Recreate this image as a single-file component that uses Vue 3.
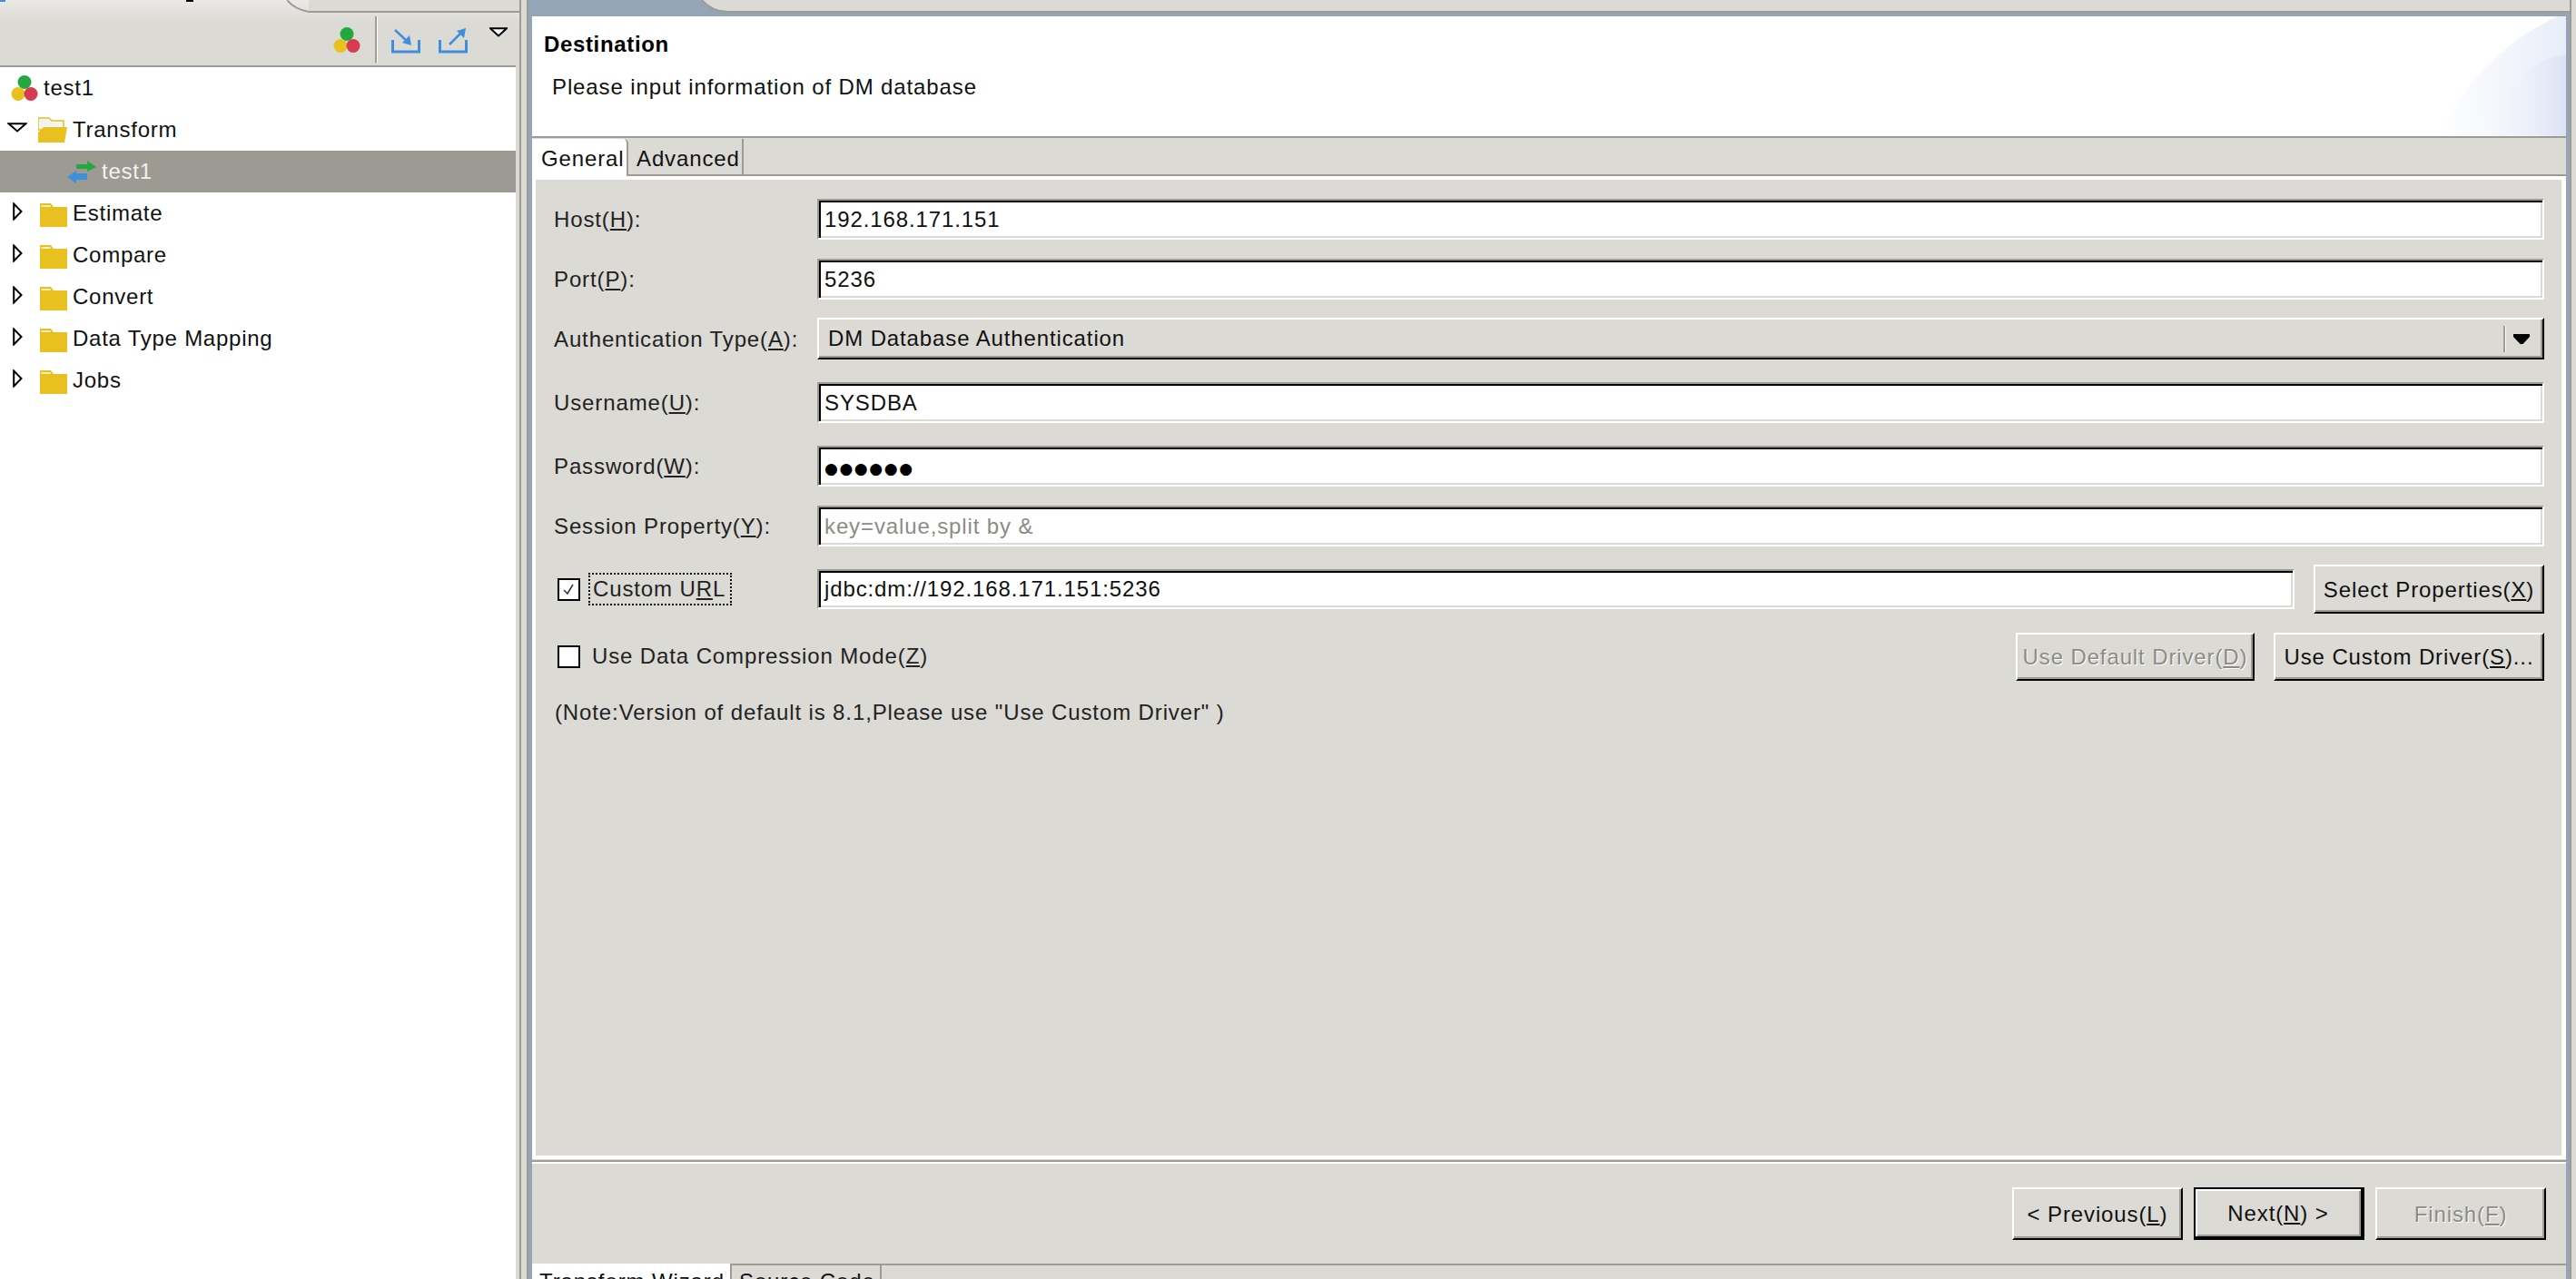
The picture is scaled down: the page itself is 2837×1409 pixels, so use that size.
<script setup>
const folders = ['Estimate', 'Compare', 'Convert', 'Data Type Mapping', 'Jobs']
</script>

<template>
  <div class="page">
    <aside class="left">
      <div class="view-tabs">
        <span class="speck-blue"></span>
        <span class="speck-black"></span>
        <div class="view-tab-space"></div>
        <svg class="view-tab-curve" width="24" height="14" viewBox="0 0 24 14">
          <path d="M0 0 Q8 10 24 13" fill="none" stroke="#9d9b93" stroke-width="2" />
        </svg>
        <div class="view-tab-rest"></div>
      </div>
      <div class="toolbar">
        <svg class="tb-icon" width="30" height="29" viewBox="0 0 30 29">
          <circle cx="15" cy="7.500" r="7.500" fill="#22a83f" />
          <circle cx="8" cy="20.500" r="7.500" fill="#e8c020" />
          <circle cx="22" cy="20.500" r="7.500" fill="#d63c50" />
        </svg>
        <span class="tb-sep"></span>
        <svg class="tb-tray" width="32" height="28" viewBox="0 0 32 28">
          <path d="M1.500 13 V26 H30.500 V13" fill="none" stroke="#3f8fdc" stroke-width="3" />
          <path d="M4 2 L19 16" stroke="#3f8fdc" stroke-width="2.500" />
          <path d="M22 19 L12 16 L20 8 Z" fill="#3f8fdc" />
        </svg>
        <svg class="tb-tray second" width="32" height="28" viewBox="0 0 32 28">
          <path d="M1.500 13 V26 H30.500 V13" fill="none" stroke="#3f8fdc" stroke-width="3" />
          <path d="M12 18 L27 3" stroke="#3f8fdc" stroke-width="2.500" />
          <path d="M30 0 L20 3 L28 11 Z" fill="#3f8fdc" />
        </svg>
        <svg class="tb-menu" width="20" height="11" viewBox="0 0 20 11">
          <path d="M1 1.200 H19 L10 9.500 Z" fill="#fff" stroke="#000" stroke-width="2" />
        </svg>
      </div>
      <div class="tree">
        <div class="row root">
          <svg width="30" height="29" viewBox="0 0 30 29">
            <circle cx="15" cy="7.500" r="7.500" fill="#22a83f" />
            <circle cx="8" cy="20.500" r="7.500" fill="#e8c020" />
            <circle cx="22" cy="20.500" r="7.500" fill="#d63c50" />
          </svg>
          <span>test1</span>
        </div>
        <div class="row open">
          <svg class="twisty" width="22" height="11" viewBox="0 0 22 11">
            <path d="M1.500 1.200 H20.500 L11 9.500 Z" fill="#fff" stroke="#000" stroke-width="2" />
          </svg>
          <svg class="folder-open" width="32" height="28" viewBox="0 0 32 28">
            <path d="M0 1 H12 L15 4 H28 V14 H0 Z" fill="#f4f4f0" stroke="#e8c020" stroke-width="1.500" />
            <path d="M0 17 L6 11 H32 L29 28 H0 Z" fill="#e8c020" />
          </svg>
          <span>Transform</span>
        </div>
        <div class="row selected">
          <svg width="32" height="25" viewBox="0 0 32 25">
            <path d="M10 4 H22 V0 L32 7 L22 12 V9 H10 Z" fill="#22a83f" />
            <path d="M22 14 H10 V11 L0 18 L10 25 V21 H22 Z" fill="#3f8fdc" />
          </svg>
          <span>test1</span>
        </div>
        <div v-for="name in folders" :key="name" class="row closed">
          <svg class="twisty-side" width="11" height="20" viewBox="0 0 11 20">
            <path d="M1.200 1.500 V18.500 L9.500 10 Z" fill="#fff" stroke="#000" stroke-width="2" />
          </svg>
          <svg class="folder" width="30" height="26" viewBox="0 0 30 26">
            <path d="M0 0 H12 L15 4 H30 V26 H0 Z" fill="#e8c020" />
            <path d="M1.500 2 H11 L12.500 4 H1.500 Z" fill="#f6eeb8" />
          </svg>
          <span>{{ name }}</span>
        </div>
      </div>
    </aside>

    <div class="sash"></div>

    <main class="editor">
      <div class="editor-tabs">
        <svg class="editor-tab-shape" width="218" height="14" viewBox="0 0 218 14">
          <rect width="218" height="14" fill="#93a5b7" />
          <path d="M191 0 Q201 12 218 12 V0 Z" fill="#dbdad5" />
          <path d="M191 0 Q201 12 218 13" fill="none" stroke="#9d9b93" stroke-width="2" />
        </svg>
        <div class="editor-tab-rest"></div>
      </div>

      <div class="frame">
        <header class="banner">
          <div class="banner-title">Destination</div>
          <div class="banner-desc">Please input information of DM database</div>
          <svg class="swoosh" width="144" height="132" viewBox="0 0 144 132">
            <defs>
              <linearGradient id="swooshA" x1="0" x2="1" y1="0" y2="0">
                <stop offset="0" stop-color="#ffffff" />
                <stop offset="1" stop-color="#e9edf9" />
              </linearGradient>
              <linearGradient id="swooshB" x1="0" x2="1" y1="0" y2="0">
                <stop offset="0" stop-color="#ffffff" stop-opacity="0" />
                <stop offset="1" stop-color="#dde3f5" />
              </linearGradient>
            </defs>
            <path d="M135 0 Q55 35 0 132 H144 V0 Z" fill="url(#swooshA)" />
            <path d="M144 42 Q90 48 40 132 H144 Z" fill="url(#swooshB)" />
          </svg>
        </header>

        <nav class="tabs">
          <div class="tab active">General</div>
          <div class="tab other">Advanced</div>
        </nav>

        <section class="panel">
          <div class="form">
            <div class="label">Host(<u>H</u>):</div>
            <div class="field">192.168.171.151</div>

            <div class="label">Port(<u>P</u>):</div>
            <div class="field">5236</div>

            <div class="label">Authentication Type(<u>A</u>):</div>
            <div class="combo">
              <span class="combo-text">DM Database Authentication</span>
              <span class="combo-sep"></span>
              <svg class="combo-arrow" width="18" height="11" viewBox="0 0 18 11">
                <path d="M0 0 H18 V3 L10.500 11 H7.500 L0 3 Z" fill="#000" />
              </svg>
            </div>

            <div class="label">Username(<u>U</u>):</div>
            <div class="field">SYSDBA</div>

            <div class="label">Password(<u>W</u>):</div>
            <div class="field"><span class="dots">●●●●●●</span></div>

            <div class="label">Session Property(<u>Y</u>):</div>
            <div class="field hint">key=value,split by &amp;</div>

            <div class="check-line">
              <span class="check">
                <svg width="15" height="15" viewBox="0 0 15 15">
                  <path d="M2 8 L6 12 L12 2" fill="none" stroke="#333" stroke-width="1.500" />
                </svg>
              </span>
              <span class="focus">Custom U<u>R</u>L</span>
            </div>
            <div class="url-line">
              <div class="field url">jdbc:dm://192.168.171.151:5236</div>
              <div class="btn select">Select Properties(<u>X</u>)</div>
            </div>

            <div class="option-line">
              <span class="check"></span>
              <span class="option-text">Use Data Compression Mode(<u>Z</u>)</span>
              <div class="btn driver disabled">Use Default Driver(<u>D</u>)</div>
              <div class="btn driver custom">Use Custom Driver(<u>S</u>)...</div>
            </div>

            <div class="note">(Note:Version of default is 8.1,Please use "Use Custom Driver" )</div>
          </div>
        </section>

        <footer class="actions">
          <div class="btn nav">&lt; Previous(<u>L</u>)</div>
          <div class="btn nav default">Next(<u>N</u>) &gt;</div>
          <div class="btn nav disabled">Finish(<u>F</u>)</div>
        </footer>

        <div class="bottom-tabs">
          <div class="bottom-tab active">Transform Wizard</div>
          <div class="bottom-tab">Source Code</div>
        </div>
      </div>
    </main>

    <div class="edge"></div>
  </div>
</template>

<style scoped>
.page {
  display: flex;
  width: 2837px;
  height: 1409px;
  overflow: hidden;
  background: #dbdad5;
  color: #111;
  font-family: "Liberation Sans", Arial, sans-serif;
  font-size: 24px;
  letter-spacing: 0.88px;
  line-height: 30px;
  white-space: nowrap;
}
u {
  text-underline-offset: 2px;
}

/* left view */
.left {
  position: relative;
  display: flex;
  flex-direction: column;
  width: 572px;
  flex: none;
  background: linear-gradient(#eae9e5 0, #dbdad5 26px);
}
.view-tabs {
  display: flex;
  height: 14px;
  flex: none;
}
.speck-blue {
  position: absolute;
  left: 0;
  top: 0;
  width: 6px;
  height: 2px;
  background: #3f8fdc;
}
.speck-black {
  position: absolute;
  left: 205px;
  top: 0;
  width: 8px;
  height: 2px;
  background: #000;
}
.view-tab-space {
  width: 316px;
}
.view-tab-rest {
  flex: 1;
  border-bottom: 2px solid #9d9b93;
  background: #dbdad5;
}
.view-tab-curve {
  display: block;
}
.toolbar {
  display: flex;
  align-items: flex-start;
  height: 58px;
  margin-right: 4px;
  padding-left: 367px;
  border-bottom: 2px solid #9d9b93;
  flex: none;
  box-sizing: content-box;
}
.tb-icon {
  margin-top: 16px;
}
.tb-sep {
  width: 2px;
  height: 51px;
  margin: 4px 0 0 16px;
  background: #9d9b93;
  border-right: 1px solid #fff;
}
.tb-tray {
  margin: 17px 0 0 15px;
}
.tb-tray.second {
  margin-left: 20px;
}
.tb-menu {
  margin: 16px 0 0 24px;
}
.tree {
  flex: 1;
  margin-right: 4px;
  background: #fff;
  letter-spacing: 0.75px;
}
.row {
  display: flex;
  align-items: center;
  height: 46px;
}
.root {
  padding-left: 12px;
  gap: 6px;
}
.open {
  padding-left: 8px;
}
.twisty {
  margin-top: -5px;
}
.folder-open {
  margin: 0 6px 0 12px;
}
.selected {
  padding-left: 74px;
  gap: 6px;
  background: #9c9a92;
  color: #f2f2ef;
}
.closed {
  padding-left: 14px;
}
.twisty-side {
  margin-top: -4px;
}
.folder {
  margin: 4px 6px 0 19px;
}

/* sashes */
.sash {
  width: 6px;
  flex: none;
  border-left: 2px solid #9d9b93;
  border-right: 2px solid #9d9b93;
}
.edge {
  flex: 1;
  border-left: 2px solid #9d9b93;
}

/* editor */
.editor {
  display: flex;
  flex-direction: column;
  width: 2248px;
  flex: none;
}
.editor-tabs {
  display: flex;
  height: 14px;
  flex: none;
}
.editor-tab-shape {
  display: block;
}
.editor-tab-rest {
  flex: 1;
  border-bottom: 2px solid #9d9b93;
}
.frame {
  display: flex;
  flex-direction: column;
  flex: 1;
  min-height: 0;
  border: 4px solid #93a5b7;
  border-bottom: 0;
}
.banner {
  position: relative;
  height: 132px;
  flex: none;
  background: #fff;
  border-bottom: 2px solid #9d9b93;
  box-sizing: content-box;
  overflow: hidden;
}
.banner-title {
  margin: 16px 0 0 13px;
  font-weight: 700;
  letter-spacing: 0.65px;
  color: #000;
}
.banner-desc {
  margin: 17px 0 0 22px;
}
.swoosh {
  position: absolute;
  right: 0;
  top: 0;
}
.tabs {
  display: flex;
  align-items: flex-end;
  height: 40px;
  flex: none;
  border-bottom: 2px solid #9d9b93;
  box-sizing: content-box;
}
.tab {
  box-sizing: border-box;
  height: 39px;
  line-height: 44px;
}
.tab.active {
  width: 106px;
  height: 41px;
  margin-bottom: -2px;
  padding-left: 10px;
  background: #fff;
  border-right: 2px solid #9d9b93;
  border-top-right-radius: 5px;
}
.tab.other {
  width: 127px;
  padding-left: 9px;
  border-right: 2px solid #9d9b93;
}
.panel {
  flex: 1;
  min-height: 0;
  box-sizing: border-box;
  margin: 0 0 1px;
  padding: 10px 19px 0 20px;
  border: 4px solid #fff;
  border-right-width: 5px;
}
.form {
  display: grid;
  grid-template-columns: 290px 1fr;
  grid-template-rows: 66px 66px 66px 74px 66px 66px 74px 74px 50px;
  align-items: center;
}
.label {
  padding-top: 2px;
  color: #222;
}
.field {
  box-sizing: border-box;
  height: 45px;
  padding-left: 6px;
  line-height: 41px;
  background: #fff;
  border: 2px solid;
  border-color: #9d9b93 #fff #fff #9d9b93;
  box-shadow: inset 2px 2px 0 #000, inset -2px -2px 0 #dbdad5;
}
.hint {
  color: #8c8b85;
}
.dots {
  font-family: "DejaVu Sans", sans-serif;
  font-size: 17px;
  letter-spacing: 1.600px;
  color: #000;
}
.combo {
  display: flex;
  align-items: center;
  box-sizing: border-box;
  height: 46px;
  padding-left: 10px;
  border: 2px solid;
  border-color: #fff #000 #000 #fff;
  box-shadow: inset -2px -2px 0 #9d9b93;
}
.combo-text {
  flex: 1;
}
.combo-sep {
  width: 2px;
  height: 29px;
  background: #9d9b93;
  border-right: 1px solid #fff;
}
.combo-arrow {
  margin: 0 14px 0 8px;
}
.check-line,
.option-line {
  display: flex;
  align-items: center;
  padding-left: 4px;
}
.check {
  display: flex;
  align-items: center;
  justify-content: center;
  box-sizing: border-box;
  width: 25px;
  height: 25px;
  flex: none;
  background: #fff;
  border: 2px solid #000;
}
.focus {
  margin-left: 9px;
  padding: 1px 5px 1px 3px;
  border: 2px dotted #000;
  color: #222;
}
.url-line {
  display: flex;
  align-items: center;
  gap: 21px;
}
.url {
  flex: 1;
  height: 44px;
  line-height: 40px;
}
.btn {
  box-sizing: border-box;
  display: flex;
  align-items: center;
  justify-content: center;
  flex: none;
  padding-top: 2px;
  border: 2px solid;
  border-color: #fff #000 #000 #fff;
  box-shadow: inset -2px -2px 0 #9d9b93;
  white-space: pre;
}
.select {
  width: 254px;
  height: 54px;
}
.option-line {
  grid-column: 1 / 3;
}
.option-text {
  margin-left: 13px;
  color: #222;
}
.driver {
  height: 53px;
}
.driver.disabled {
  width: 263px;
  margin-left: auto;
}
.driver.custom {
  width: 298px;
  margin-left: 21px;
}
.disabled {
  color: #8c8b85;
  text-shadow: 1px 1px 0 #fff;
}
.note {
  grid-column: 1 / 3;
  padding-left: 1px;
  color: #222;
}
.actions {
  display: flex;
  justify-content: flex-end;
  align-items: flex-start;
  gap: 12px;
  height: 114px;
  flex: none;
  padding: 28px 22px 0 0;
  box-sizing: border-box;
  border-top: 2px solid #9d9b93;
  box-shadow: inset 0 2px 0 #fff;
}
.nav {
  width: 188px;
  height: 58px;
  padding-top: 1px;
}
.nav.default {
  outline: 0;
  border-color: #000;
  border-width: 2px 4px 4px 2px;
  box-shadow: inset 2px 2px 0 #fff, inset -2px -2px 0 #9d9b93;
}
.bottom-tabs {
  display: flex;
  box-sizing: border-box;
  height: 17px;
  flex: none;
  border-top: 2px solid #9d9b93;
}
.bottom-tab {
  box-sizing: border-box;
  width: 165px;
  height: 30px;
  padding: 3px 0 0 8px;
  border-right: 2px solid #9d9b93;
}
.bottom-tab.active {
  width: 220px;
  margin-top: -2px;
  padding: 5px 0 0 8px;
  background: #fff;
}
</style>
